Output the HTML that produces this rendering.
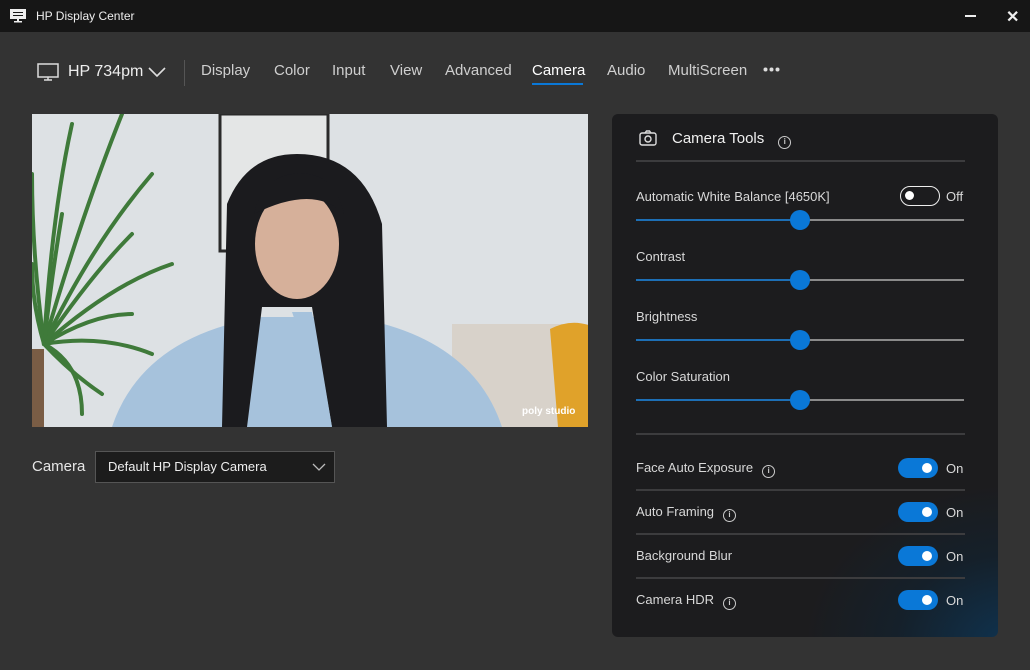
<!DOCTYPE html>
<html><head><meta charset="utf-8"><style>
*{margin:0;padding:0;box-sizing:border-box}
body{width:1030px;height:670px;background:#333333;font-family:"Liberation Sans",sans-serif;color:#e6e6e6;position:relative;overflow:hidden}
.tb{position:absolute;left:0;top:0;width:1030px;height:32px;background:#161616}
.tb .t{position:absolute;left:36px;top:9px;font-size:12px;color:#eee}
.nav{position:absolute;top:62px;font-size:15px;color:#cfcfcf}
.panel{position:absolute;left:612px;top:114px;width:386px;height:523px;border-radius:6px;background:radial-gradient(ellipse 260px 200px at 400px 530px,#0f3350 0%,#15202a 45%,#1c1c1e 80%);}
.lbl{position:absolute;left:24px;font-size:13px;color:#d8d8d8}
.sl{position:absolute;left:24px;width:328px;height:2px;background:#8a8a8a}
.sl .f{position:absolute;left:0;top:0;height:2px;width:163px;background:#1d6fb5}
.sl .k{position:absolute;left:154px;top:-9px;width:20px;height:20px;border-radius:50%;background:#0a78d7}
.hr{position:absolute;left:24px;width:329px;height:2px;background:#3c3c3e}
.tg{position:absolute;left:286px;width:40px;height:20px;border-radius:10px;background:#0a78d7}
.tg:after{content:"";position:absolute;right:6px;top:5px;width:10px;height:10px;border-radius:50%;background:#fff}
.on{position:absolute;left:334px;font-size:13px;color:#d8d8d8}
.i{display:inline-block;width:13px;height:13px;border:1.3px solid #ccc;border-radius:50%;font-size:8px;line-height:10px;text-align:center;font-weight:bold;vertical-align:-1px;margin-left:6px;color:#ccc}
</style></head><body>
<div class="tb">
<svg style="position:absolute;left:10px;top:9px" width="16" height="14"><rect x="0" y="0" width="16" height="10" fill="#eee"/><rect x="3" y="3" width="10" height="1" fill="#161616"/><rect x="3" y="6" width="10" height="1" fill="#161616"/><rect x="7" y="10" width="2" height="2" fill="#eee"/><rect x="4" y="12" width="8" height="1.5" fill="#eee"/></svg>
<div class="t">HP Display Center</div>
<div style="position:absolute;left:965px;top:15px;width:11px;height:2px;background:#eee"></div>
<div style="position:absolute;left:1006px;top:7px;font-size:16px;color:#eee;font-weight:bold">✕</div>
</div>
<svg style="position:absolute;left:37px;top:63px" width="22" height="18"><rect x="1" y="1" width="20" height="13" fill="none" stroke="#ddd" stroke-width="1.5"/><path d="M11 14v3M7 17h8" stroke="#ddd" stroke-width="1.5"/></svg>
<div class="nav" style="left:68px;top:63px;color:#eee;font-size:16px">HP 734pm</div>
<svg style="position:absolute;left:148px;top:66px" width="18" height="12"><path d="M1 2l8 8 8-8" fill="none" stroke="#ddd" stroke-width="1.6"/></svg>
<div style="position:absolute;left:184px;top:60px;width:1px;height:26px;background:#555"></div>
<div class="nav" style="left:201px">Display</div>
<div class="nav" style="left:274px">Color</div>
<div class="nav" style="left:332px">Input</div>
<div class="nav" style="left:390px">View</div>
<div class="nav" style="left:445px">Advanced</div>
<div class="nav" style="left:532px;color:#fff">Camera</div>
<div style="position:absolute;left:532px;top:83px;width:51px;height:2px;background:#0a78d7"></div>
<div class="nav" style="left:607px">Audio</div>
<div class="nav" style="left:668px">MultiScreen</div>
<svg style="position:absolute;left:763px;top:67px" width="18" height="5"><circle cx="2.5" cy="2.5" r="2" fill="#ddd"/><circle cx="8.5" cy="2.5" r="2" fill="#ddd"/><circle cx="14.5" cy="2.5" r="2" fill="#ddd"/></svg>

<svg style="position:absolute;left:32px;top:114px" width="556" height="313" viewBox="0 0 556 313">
<rect width="556" height="313" fill="#dde1e4"/>
<rect x="188" y="0" width="108" height="137" fill="#e4e6e6" stroke="#2a2a2a" stroke-width="3"/>
<rect x="420" y="210" width="136" height="103" fill="#d8d2ca"/>
<path d="M518 215 q20-10 38-4 v102 h-30 z" fill="#e0a22a"/>
<g stroke="#3f7a3a" stroke-width="4" fill="none" stroke-linecap="round">
<path d="M12 230 Q20 100 40 10"/><path d="M12 230 Q50 100 90 0"/><path d="M12 230 Q0 140 0 60"/><path d="M12 230 Q60 130 120 60"/><path d="M12 230 Q80 170 140 150"/><path d="M12 230 Q40 260 70 280"/><path d="M12 230 Q70 220 120 240"/><path d="M12 230 Q20 160 30 100"/><path d="M12 230 Q60 160 100 120"/><path d="M12 230 Q0 190 0 150"/><path d="M12 230 Q60 200 100 200"/><path d="M12 230 Q50 250 50 300"/>
</g>
<rect x="0" y="235" width="12" height="78" fill="#7a5d45"/>
<path d="M80 313 q30-90 150-110 l90 0 q120 20 150 110z" fill="#a6c2dc"/>
<path d="M195 90 q20-50 70-50 q65 0 85 70 l5 203 h-55 l-20-120 h-50 l-15 120 h-25 z" fill="#1b1b1e"/>
<ellipse cx="265" cy="130" rx="42" ry="55" fill="#d6b09a"/>
<path d="M222 100 q10-45 55-40 q28 5 35 40 q-30-30 -90 0z" fill="#1b1b1e"/>
<path d="M300 313 l-40-115 h20z" fill="#a6c2dc"/>
<text x="490" y="300" font-size="10" font-weight="bold" fill="#fff" font-family="Liberation Sans">poly studio</text>
</svg>

<div style="position:absolute;left:32px;top:458px;font-size:15px;color:#e6e6e6">Camera</div>
<div style="position:absolute;left:95px;top:451px;width:240px;height:32px;background:#1c1c1c;border:1px solid #555">
<div style="position:absolute;left:12px;top:7px;font-size:13px;color:#eee">Default HP Display Camera</div>
<svg style="position:absolute;left:216px;top:11px" width="14" height="9"><path d="M1 1l6 6 6-6" fill="none" stroke="#bbb" stroke-width="1.3"/></svg>
</div>

<div class="panel">
<svg style="position:absolute;left:27px;top:16px" width="18" height="16"><rect x="1" y="3" width="16" height="12" rx="2" fill="none" stroke="#ddd" stroke-width="1.4"/><path d="M6 3l1.5-2h3l1.5 2" fill="none" stroke="#ddd" stroke-width="1.4"/><circle cx="9" cy="9" r="3" fill="none" stroke="#ddd" stroke-width="1.4"/></svg>
<div style="position:absolute;left:60px;top:16px;font-size:15px;color:#f0f0f0">Camera Tools<span class="i" style="margin-left:14px">i</span></div>
<div class="hr" style="top:46px"></div>
<div class="lbl" style="top:75px">Automatic White Balance [4650K]</div>
<div style="position:absolute;left:288px;top:72px;width:40px;height:20px;border:1.5px solid #eee;border-radius:10px"><div style="position:absolute;left:4px;top:4px;width:9px;height:9px;border-radius:50%;background:#fff"></div></div>
<div class="on" style="top:75px">Off</div>
<div class="sl" style="top:105px"><div class="f"></div><div class="k"></div></div>
<div class="lbl" style="top:135px">Contrast</div>
<div class="sl" style="top:165px"><div class="f"></div><div class="k"></div></div>
<div class="lbl" style="top:195px">Brightness</div>
<div class="sl" style="top:225px"><div class="f"></div><div class="k"></div></div>
<div class="lbl" style="top:255px">Color Saturation</div>
<div class="sl" style="top:285px"><div class="f"></div><div class="k"></div></div>
<div class="hr" style="top:319px"></div>
<div class="lbl" style="top:346px">Face Auto Exposure<span class="i" style="margin-left:9px">i</span></div>
<div class="tg" style="top:344px"></div><div class="on" style="top:347px">On</div>
<div class="hr" style="top:375px"></div>
<div class="lbl" style="top:390px">Auto Framing<span class="i" style="margin-left:9px">i</span></div>
<div class="tg" style="top:388px"></div><div class="on" style="top:391px">On</div>
<div class="hr" style="top:419px"></div>
<div class="lbl" style="top:434px">Background Blur</div>
<div class="tg" style="top:432px"></div><div class="on" style="top:435px">On</div>
<div class="hr" style="top:463px"></div>
<div class="lbl" style="top:478px">Camera HDR<span class="i" style="margin-left:9px">i</span></div>
<div class="tg" style="top:476px"></div><div class="on" style="top:479px">On</div>
</div>
</body></html>
